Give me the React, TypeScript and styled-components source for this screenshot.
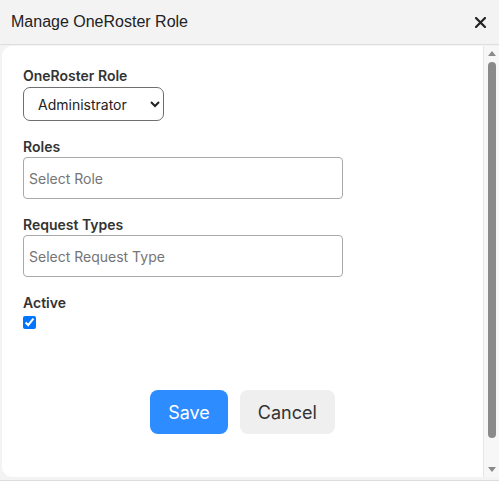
import styled, { createGlobalStyle } from "styled-components";
import { useState } from "react";

const GlobalStyle = createGlobalStyle`
  html, body {
    margin: 0;
    padding: 0;
    background: #f3f3f3;
  }
  * {
    box-sizing: border-box;
  }
`;

const Dialog = styled.div`
  width: 499px;
  height: 481px;
  display: flex;
  flex-direction: column;
  background: #f3f3f3;
`;

const Header = styled.div`
  height: 45px;
  flex-shrink: 0;
  display: flex;
  align-items: center;
  justify-content: space-between;
  padding: 0 13px 0 11px;
  border-bottom: 1px solid #dedede;
`;

const Title = styled.h2`
  margin: 0;
  font-family: "Liberation Sans", Arial, sans-serif;
  font-weight: 400;
  font-size: 16px;
  color: #222;
`;

const CloseButton = styled.button`
  border: none;
  background: none;
  padding: 0;
  width: 12px;
  height: 12px;
  display: flex;
  align-items: center;
  justify-content: center;
  cursor: pointer;
`;

const Body = styled.div`
  flex: 1;
  min-height: 0;
  padding: 1px 0 3px 2px;
  border-bottom: 1px solid #dcdcdc;
  display: flex;
`;

const Panel = styled.div`
  flex: 1;
  overflow: hidden;
  background: #fff;
  border-radius: 10px 0 0 10px;
  border-right: 1px solid #e6e6e6;
`;

const Scrollbar = styled.div`
  width: 15px;
  flex-shrink: 0;
  display: flex;
  flex-direction: column;
  background: #f7f7f7;
`;

const ArrowButton = styled.div`
  height: 15px;
  display: flex;
  align-items: center;
  justify-content: center;
`;

const Track = styled.div`
  flex: 1;
  display: flex;
  flex-direction: column;
  align-items: center;
  padding: 1px 0 24px;
`;

const Thumb = styled.div`
  flex: 1;
  width: 8px;
  border-radius: 4px;
  background: #8a8a8a;
`;

const Form = styled.form`
  display: flex;
  flex-direction: column;
  padding: 20px 21px 80px;
  font-family: Inter, "Noto Sans", sans-serif;
`;

const Field = styled.div<{ $gap?: number }>`
  display: flex;
  flex-direction: column;
  align-items: flex-start;
  margin-bottom: ${(p) => p.$gap ?? 16}px;
`;

const Label = styled.label`
  font-size: 14px;
  font-weight: 600;
  line-height: 20px;
  color: #333;
`;

const Select = styled.select`
  margin-top: 1px;
  height: 34px;
  width: 141px;
  padding: 0 6px 0 10px;
  font-family: Inter, "Noto Sans", sans-serif;
  font-size: 14px;
  color: #222;
  background: #fff;
  border: 1px solid #6f6f6f;
  border-radius: 7px;
`;

const TextInput = styled.input`
  width: 320px;
  height: 42px;
  padding: 0 5px;
  font-family: Inter, "Noto Sans", sans-serif;
  font-size: 14px;
  color: #222;
  border: 1px solid #a9a9a9;
  border-radius: 4px;
  outline: none;

  &::placeholder {
    color: #757575;
  }
`;

const Checkbox = styled.input`
  margin: 3px 0 0;
  width: 13px;
  height: 13px;
`;

const Actions = styled.div`
  display: flex;
  justify-content: center;
  gap: 12px;
  margin-top: 61px;
`;

const Button = styled.button<{ $primary?: boolean }>`
  height: 44px;
  padding: 0 18px;
  border: none;
  border-radius: 8px;
  font-family: Inter, "Noto Sans", sans-serif;
  font-size: 18px;
  cursor: pointer;
  background: ${(p) => (p.$primary ? "#2d8cff" : "#efefef")};
  color: ${(p) => (p.$primary ? "#fff" : "#333")};
`;

const Arrow = ({ down }: { down?: boolean }) => (
  <svg width="8" height="5" viewBox="0 0 8 5">
    <polygon points={down ? "0,0 8,0 4,5" : "0,5 8,5 4,0"} fill="#8a8a8a" />
  </svg>
);

export default function App() {
  const [role, setRole] = useState("administrator");
  const [active, setActive] = useState(true);

  return (
    <Dialog>
      <GlobalStyle />
      <Header>
        <Title>Manage OneRoster Role</Title>
        <CloseButton aria-label="Close">
          <svg width="11" height="11" viewBox="0 0 11 11">
            <path
              d="M1 1L10 10M10 1L1 10"
              stroke="#222"
              strokeWidth="2.2"
              strokeLinecap="round"
            />
          </svg>
        </CloseButton>
      </Header>
      <Body>
        <Panel>
          <Form onSubmit={(e) => e.preventDefault()}>
            <Field>
              <Label>OneRoster Role</Label>
              <Select value={role} onChange={(e) => setRole(e.target.value)}>
                <option value="administrator">Administrator</option>
                <option value="teacher">Teacher</option>
                <option value="student">Student</option>
              </Select>
            </Field>
            <Field>
              <Label>Roles</Label>
              <TextInput placeholder="Select Role" />
            </Field>
            <Field>
              <Label>Request Types</Label>
              <TextInput placeholder="Select Request Type" />
            </Field>
            <Field $gap={0}>
              <Label>Active</Label>
              <Checkbox
                type="checkbox"
                checked={active}
                onChange={(e) => setActive(e.target.checked)}
              />
            </Field>
            <Actions>
              <Button $primary type="submit">Save</Button>
              <Button type="button">Cancel</Button>
            </Actions>
          </Form>
        </Panel>
        <Scrollbar>
          <ArrowButton>
            <Arrow />
          </ArrowButton>
          <Track>
            <Thumb />
          </Track>
          <ArrowButton>
            <Arrow down />
          </ArrowButton>
        </Scrollbar>
      </Body>
    </Dialog>
  );
}
